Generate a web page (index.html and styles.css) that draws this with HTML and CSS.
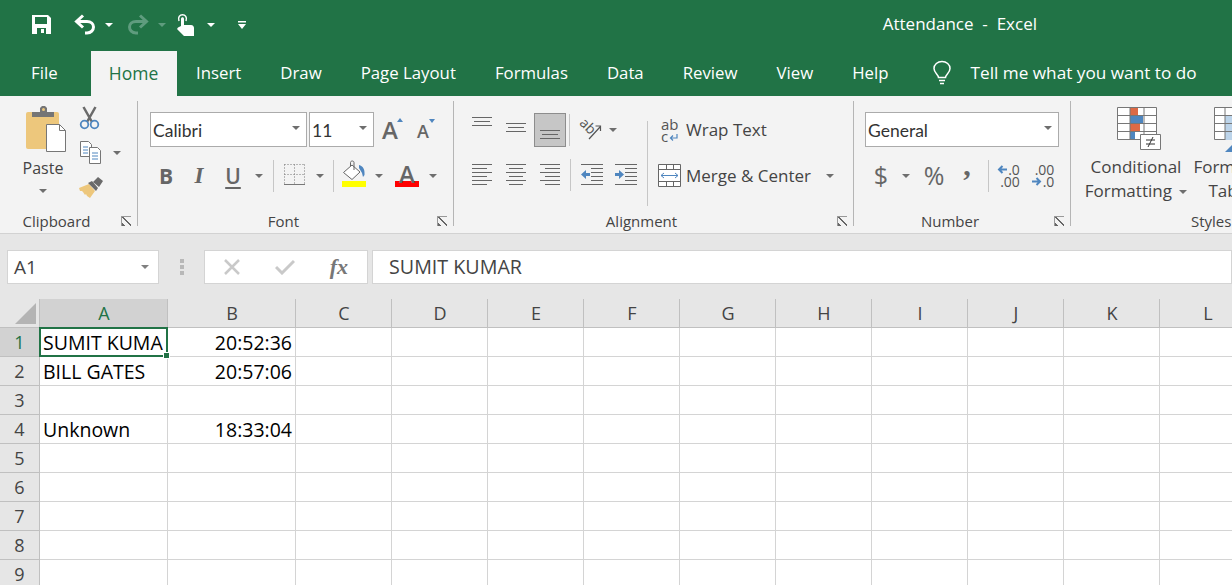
FILE: index.html
```html
<!DOCTYPE html>
<html>

<head>
    <title>Attendance - Excel</title>
    <link rel="stylesheet" href="styles.css">
</head>

<body>
    <header class="titlebar">
        <div class="qat">
            <svg class="save" width="19" height="19" viewBox="0 0 19 19"><path fill="#fff" d="M0 0h16l3 3v16H0z"/><path fill="#217346" d="M3 2h12v7H3zM5 13h9v6H5z"/><path fill="#fff" d="M9 14h3v4H9z"/></svg>
            <svg class="undo" width="22" height="21" viewBox="0 0 22 21"><path fill="none" stroke="#fff" stroke-width="3" d="M9 1.500 2.500 7.500 9 13.500M3 7.500h10c4 0 6.500 2.500 6.500 5.500s-2.500 6-6.500 6h-2"/></svg>
            <span class="caret white"></span>
            <svg class="redo" width="22" height="21" viewBox="0 0 22 21"><path fill="none" stroke="#5f9c7e" stroke-width="3" d="M13 1.500 19.500 7.500 13 13.500M19 7.500H9c-4 0-6.500 2.500-6.500 5.500s2.500 6 6.500 6h2"/></svg>
            <span class="caret dim"></span>
            <svg class="touch" width="17" height="22" viewBox="0 0 17 22"><path fill="#fff" d="M4 12V5c0-2.500 3-2.500 3 0v6h7c2 0 3 1.500 3 3v8H7L0 15l1-1.500z"/><path fill="none" stroke="#fff" stroke-width="1.500" d="M2 7C.500 3 3 .8 5.500.8S10.500 3 9 7"/></svg>
            <span class="caret white"></span>
            <svg class="customize" width="10" height="8" viewBox="0 0 10 8"><path fill="#fff" d="M1 0h8v1.500H1zM1 3h8L5 8z"/></svg>
        </div>
        <div class="doc-title">Attendance &nbsp;-&nbsp; Excel</div>
    </header>

    <nav class="tabs">
        <span class="tab tab-file">File</span>
        <span class="tab tab-active">Home</span>
        <span class="tab">Insert</span>
        <span class="tab">Draw</span>
        <span class="tab">Page Layout</span>
        <span class="tab">Formulas</span>
        <span class="tab">Data</span>
        <span class="tab">Review</span>
        <span class="tab">View</span>
        <span class="tab">Help</span>
        <span class="tell">
            <svg width="20" height="25" viewBox="0 0 20 25"><path fill="none" stroke="#fff" stroke-width="1.500" d="M6.500 17.500c0-3-4.500-4.500-4.500-9C2 4.500 5.500 1.500 10 1.500s8 3 8 7c0 4.500-4.500 6-4.500 9zM7 20.500h6M8 23.500h4"/></svg>
            Tell me what you want to do
        </span>
    </nav>

    <section class="ribbon">
        <div class="group group-clipboard">
            <div class="clip-body">
                <div class="paste">
                    <svg class="paste-icon" width="41" height="47" viewBox="0 0 41 47"><rect x="0" y="6" width="33" height="37" rx="2" fill="#edc77c"/><path fill="#757575" d="M6 11V6h8V2l2-2h3l2 2v4h7v5z"/><circle cx="17.500" cy="3.500" r="1.500" fill="#edc77c"/><path fill="#fff" stroke="#767676" d="M20.500 18.500h13l6 6v21h-19z"/><path fill="none" stroke="#767676" d="M33.500 18.500v6h6"/></svg>
                    <span class="paste-label">Paste</span>
                    <span class="caret"></span>
                </div>
                <div class="clip-tools">
                    <svg class="ic-cut" width="21" height="24" viewBox="0 0 21 24"><path fill="none" stroke="#6a6a6a" stroke-width="2.500" d="M4.500 1l8.500 15M16.500 1 8 16"/><circle cx="5.500" cy="18.500" r="3.800" fill="none" stroke="#4f86bf" stroke-width="1.800"/><circle cx="15.500" cy="18.500" r="3.800" fill="none" stroke="#4f86bf" stroke-width="1.800"/></svg>
                    <div class="copy-row">
                        <svg width="22" height="23" viewBox="0 0 22 23"><path fill="#fff" stroke="#767676" d="M.5.500h8l3 3v12H.500z"/><path fill="#fff" stroke="#767676" d="M9.500 6.500h8l3 3v13h-11z"/><path stroke="#4f86bf" d="M3 6h5M3 9h5M3 12h5M12 12h6M12 15h6M12 18h6"/></svg>
                        <span class="caret"></span>
                    </div>
                    <svg class="ic-brush" width="25" height="21" viewBox="0 0 25 21"><path fill="#edc77c" d="M0 11l10-4 6 7-5 7-3-2-1-2-1 1-2-3-1-1-2 0z"/><path fill="#6a6a6a" d="M9 6l4-2 6 7-2 3zM14 5l5-5 5 4-4 6z"/></svg>
                </div>
            </div>
            <div class="group-foot"><span class="group-label">Clipboard</span><span class="launcher"></span></div>
        </div>

        <div class="group group-font">
            <div class="font-top">
                <div class="select select-font"><span class="calibri">Calibri</span><span class="caret"></span></div>
                <div class="select select-size"><span class="calibri">11</span><span class="caret"></span></div>
                <span class="grow-a">A<i class="mini-up"></i></span>
                <span class="shrink-a">A<i class="mini-down"></i></span>
            </div>
            <div class="font-tools">
                <b class="glyph">B</b>
                <i class="glyph glyph-i">I</i>
                <span class="glyph glyph-u">U</span>
                <span class="caret"></span>
                <span class="divider"></span>
                <svg class="ic-border" width="21" height="21" viewBox="0 0 21 21"><path fill="none" stroke="#777" stroke-dasharray="1 2" d="M.5.500h20M.5 10.500h20M.5.500v20M10.500.500v20M20.500.500v20"/><path stroke="#777" d="M0 20.500h21"/></svg>
                <span class="caret"></span>
                <span class="divider"></span>
                <svg class="ic-fill" width="24" height="27" viewBox="0 0 24 27"><path fill="#fff" stroke="#666" d="M1.500 12.500 10 5l8 7-8 7.500z"/><path fill="none" stroke="#666" d="M8.500 6V2.500c0-2 3.500-2 3.500 0V10"/><path fill="#4f86bf" d="M17 5c4 1 6 4 5.500 10L21 17l-1-4-3-5z"/><path fill="#ff0" d="M0 21h24v6H0z"/></svg>
                <span class="caret"></span>
                <span class="color-a">A</span>
                <span class="caret"></span>
            </div>
            <div class="group-foot"><span class="group-label">Font</span><span class="launcher"></span></div>
        </div>

        <div class="group group-align">
            <div class="align-cols">
                <div class="align-left">
                    <div class="align-row">
                        <svg class="ic-top" width="20" height="9" viewBox="0 0 20 9"><path stroke="#666" d="M0 .5h20M2 4.500h16M0 8.500h20"/></svg>
                        <svg class="ic-mid" width="20" height="9" viewBox="0 0 20 9"><path stroke="#666" d="M0 .5h20M2 4.500h16M0 8.500h20"/></svg>
                        <span class="ic-bottom"><svg width="20" height="9" viewBox="0 0 20 9"><path stroke="#666" d="M0 .5h20M2 4.500h16M0 8.500h20"/></svg></span>
                        <span class="divider"></span>
                        <span class="ic-orient"><span class="orient-ab">ab</span><svg width="22" height="20" viewBox="0 0 22 20"><path fill="none" stroke="#555" stroke-width="1.200" d="M9 19 20 7M15.500 6H20.500V11"/></svg></span>
                        <span class="caret"></span>
                    </div>
                    <div class="align-row align-row-low">
                        <svg class="ic-par" width="20" height="21" viewBox="0 0 20 21"><path stroke="#666" d="M0 .5h20M0 4.500h15M0 8.500h20M0 12.500h15M0 16.500h20M0 20.500h15"/></svg>
                        <svg class="ic-par" width="20" height="21" viewBox="0 0 20 21"><path stroke="#666" d="M0 .5h20M3 4.500h14M0 8.500h20M3 12.500h14M0 16.500h20M3 20.500h14"/></svg>
                        <svg class="ic-par" width="20" height="21" viewBox="0 0 20 21"><path stroke="#666" d="M0 .5h20M5 4.500h15M0 8.500h20M5 12.500h15M0 16.500h20M5 20.500h15"/></svg>
                        <span class="divider"></span>
                        <svg class="ic-outdent" width="22" height="21" viewBox="0 0 22 21"><path stroke="#666" d="M0 .5h22M10 4.500h12M10 8.500h12M10 12.500h12M10 16.500h12M0 20.500h22"/><path fill="#4f86bf" d="M0 10.500 5 6v3h4v3H5v3z"/></svg>
                        <svg class="ic-indent" width="22" height="21" viewBox="0 0 22 21"><path stroke="#666" d="M0 .5h22M10 4.500h12M10 8.500h12M10 12.500h12M10 16.500h12M0 20.500h22"/><path fill="#4f86bf" d="M9 10.500 4 6v3H0v3h4v3z"/></svg>
                    </div>
                </div>
                <span class="divider divider-tall"></span>
                <div class="align-right">
                    <div class="wide-btn">
                        <span class="ic-wrap"><span>ab</span><span class="wrap-c">c<svg width="9" height="8" viewBox="0 0 9 8"><path fill="none" stroke="#4f86bf" stroke-width="1.200" d="M8 0v4H2M4 1.500 1.500 4 4 6.500"/></svg></span></span>
                        <span>Wrap Text</span>
                    </div>
                    <div class="wide-btn">
                        <svg class="ic-merge" width="23" height="23" viewBox="0 0 23 23"><path fill="#fff" stroke="#666" d="M.5.500h22v22H.500z"/><path stroke="#666" d="M0 5.500h23M0 17.500h23M8.500 0v5M15.500 0v5M8.500 18v5M15.500 18v5"/><path fill="none" stroke="#4f86bf" d="M3 11.500h17M6 9l-3 2.500L6 14M17 9l3 2.500-3 2.500"/></svg>
                        <span>Merge &amp; Center</span>
                        <span class="caret caret-merge"></span>
                    </div>
                </div>
            </div>
            <div class="group-foot"><span class="group-label">Alignment</span><span class="launcher"></span></div>
        </div>

        <div class="group group-number">
            <div class="select select-number"><span class="calibri">General</span><span class="caret"></span></div>
            <div class="number-tools">
                <span class="num-glyph">$</span>
                <span class="caret"></span>
                <span class="num-glyph">%</span>
                <span class="num-comma">,</span>
                <span class="divider"></span>
                <span class="decimals">
                    <span class="dec-line"><svg width="10" height="9" viewBox="0 0 10 9"><path fill="none" stroke="#4f86bf" stroke-width="2" d="M10 4.500H2M5.500 1 2 4.500 5.500 8"/></svg>.0</span>
                    <span class="dec-line">.00</span>
                </span>
                <span class="decimals">
                    <span class="dec-line">.00</span>
                    <span class="dec-line"><svg width="10" height="9" viewBox="0 0 10 9"><path fill="none" stroke="#4f86bf" stroke-width="2" d="M0 4.500h8M4.500 1 8 4.500 4.500 8"/></svg>.0</span>
                </span>
            </div>
            <div class="group-foot"><span class="group-label">Number</span><span class="launcher"></span></div>
        </div>

        <div class="group group-styles">
            <div class="style-cols">
                <div class="style-btn style-cond">
                    <svg width="44" height="44" viewBox="0 0 44 44"><path fill="#fff" stroke="#777" d="M.5.500h39v32H.500z"/><path fill="#dd6a46" d="M13 1h8v7h-8zM13 17h10v7H13z"/><path fill="#4f86bf" d="M13 9h13v7H13zM13 25h5v7h-5z"/><path stroke="#777" d="M0 8.500h40M0 16.500h40M0 24.500h40M13 0v33M27 0v33"/><path fill="#fff" stroke="#777" d="M23.500 27.500h20v15h-20z"/><path stroke="#333" d="M29 33h9M29 37h9M36 30l-5 10"/></svg>
                    <span>Conditional</span>
                    <span>Formatting <i class="caret caret-inline"></i></span>
                </div>
                <div class="style-btn style-table">
                    <svg width="44" height="46" viewBox="0 0 44 46"><path fill="#fff" stroke="#777" d="M.5.500h39v32H.500z"/><path fill="#bcd4ea" d="M11 9h29v24H11z"/><path stroke="#777" d="M0 8.500h40M0 16.500h40M0 24.500h40M11 0v33"/><path fill="#4f86bf" d="M11 45l12-12v12z"/></svg>
                    <span class="format-as">Format as</span>
                    <span>Table</span>
                </div>
            </div>
            <div class="group-foot"><span class="group-label">Styles</span></div>
        </div>
    </section>

    <section class="formula-bar">
        <div class="name-box"><span>A1</span><span class="caret"></span></div>
        <div class="grip"><i></i><i></i><i></i></div>
        <div class="fx-buttons">
            <svg width="18" height="16" viewBox="0 0 18 16"><path fill="none" stroke="#c9c9c9" stroke-width="2.500" d="M2 1l14 14M16 1 2 15"/></svg>
            <svg width="20" height="16" viewBox="0 0 20 16"><path fill="none" stroke="#c9c9c9" stroke-width="3" d="M1 8l6 6L19 2"/></svg>
            <span class="fx">fx</span>
        </div>
        <div class="formula-input">SUMIT KUMAR</div>
    </section>

    <table class="sheet">
        <thead>
            <tr>
                <th class="corner"><span class="corner-mark"></span></th>
                <th class="col-a picked">A</th>
                <th class="col-b">B</th>
                <th>C</th><th>D</th><th>E</th><th>F</th><th>G</th><th>H</th><th>I</th><th>J</th><th>K</th><th>L</th>
            </tr>
        </thead>
        <tbody>
            <tr><th class="picked">1</th><td class="active"><div class="clip">SUMIT KUMA</div><span class="handle"></span></td><td class="num">20:52:36</td><td></td><td></td><td></td><td></td><td></td><td></td><td></td><td></td><td></td><td></td></tr>
            <tr><th>2</th><td>BILL GATES</td><td class="num">20:57:06</td><td></td><td></td><td></td><td></td><td></td><td></td><td></td><td></td><td></td><td></td></tr>
            <tr><th>3</th><td></td><td></td><td></td><td></td><td></td><td></td><td></td><td></td><td></td><td></td><td></td><td></td></tr>
            <tr><th>4</th><td>Unknown</td><td class="num">18:33:04</td><td></td><td></td><td></td><td></td><td></td><td></td><td></td><td></td><td></td><td></td></tr>
            <tr><th>5</th><td></td><td></td><td></td><td></td><td></td><td></td><td></td><td></td><td></td><td></td><td></td><td></td></tr>
            <tr><th>6</th><td></td><td></td><td></td><td></td><td></td><td></td><td></td><td></td><td></td><td></td><td></td><td></td></tr>
            <tr><th>7</th><td></td><td></td><td></td><td></td><td></td><td></td><td></td><td></td><td></td><td></td><td></td><td></td></tr>
            <tr><th>8</th><td></td><td></td><td></td><td></td><td></td><td></td><td></td><td></td><td></td><td></td><td></td><td></td></tr>
            <tr><th>9</th><td></td><td></td><td></td><td></td><td></td><td></td><td></td><td></td><td></td><td></td><td></td><td></td></tr>
        </tbody>
    </table>
</body>

</html>
```

FILE: styles.css
```css
html,
body {
    margin: 0;
    padding: 0;
    width: 1232px;
    height: 585px;
    overflow: hidden;
    background: #fff;
    font-family: "Open Sans", "Noto Sans", sans-serif;
    font-size: 17px;
    color: #444;
}

svg {
    display: block;
    flex: none;
}

/* title bar */
.titlebar {
    height: 51px;
    background: #217346;
    color: #fff;
    display: flex;
    justify-content: space-between;
    align-items: center;
    padding: 0 195px 2px 32px;
    box-sizing: border-box;
}

.qat {
    display: flex;
    align-items: center;
}

.undo { margin-left: 23px; }
.qat .undo + .caret { margin-left: 9px; }
.redo { margin-left: 14px; }
.redo + .caret { margin-left: 9px; }
.touch { margin-left: 11px; }
.touch + .caret { margin-left: 13px; }
.customize { margin-left: 22px; }

.doc-title {
    font-size: 17px;
    margin-bottom: 2px;
}

.caret {
    display: block;
    flex: none;
    width: 0;
    height: 0;
    border-left: 4px solid transparent;
    border-right: 4px solid transparent;
    border-top: 4px solid #6e6e6e;
}

.caret.white { border-top-color: #fff; }
.caret.dim { border-top-color: #5f9c7e; }

/* tabs */
.tabs {
    height: 45px;
    background: #217346;
    color: #fff;
    display: flex;
    padding-left: 11.5px;
    font-size: 16.8px;
    line-height: 44px;
}

.tab {
    padding: 0 19.5px;
    white-space: nowrap;
}

.tab-file { margin-right: 13.5px; }

.tab-active {
    background: #f3f3f3;
    color: #217346;
    padding: 0;
    width: 86px;
    text-align: center;
    font-size: 17.5px;
}

.tell {
    display: flex;
    align-items: center;
    gap: 18.5px;
    margin-left: 24px;
    padding-bottom: 2px;
    font-size: 17.2px;
    white-space: nowrap;
}

/* ribbon */
.ribbon {
    height: 138px;
    background: #f3f3f3;
    border-bottom: 1px solid #d2d2d2;
    box-sizing: border-box;
    display: flex;
    overflow: hidden;
    padding-top: 5px;
}

.group {
    height: 125px;
    box-sizing: border-box;
    border-right: 1px solid #b5b5b5;
    flex: none;
    display: flex;
    flex-direction: column;
    padding-top: 11px;
}

.group-clipboard { width: 138px; padding-top: 0; }
.group-font { width: 316px; padding-left: 12px; }
.group-align { width: 400px; }
.group-number { width: 217px; padding-left: 11px; }
.group-styles { flex: 1; border-right: none; padding-top: 0; }

.group-foot {
    margin-top: auto;
    height: 10px;
    display: flex;
    align-items: center;
    font-size: 15px;
    line-height: 10px;
}

.group-font .group-foot { margin-left: -12px; }
.group-number .group-foot { margin-left: -11px; }

.group-label {
    flex: 1;
    text-align: center;
}

.group-styles .group-label {
    flex: none;
    margin-left: 120px;
}

.launcher {
    width: 10px;
    height: 10px;
    margin: 0 6px 0 8px;
    box-sizing: border-box;
    border-left: 1px solid #999;
    border-top: 1px solid #999;
    background: linear-gradient(45deg, #666 0 20%, transparent 20%),
        linear-gradient(45deg, transparent 46%, #666 46% 56%, transparent 56%);
}

.divider {
    display: block;
    width: 1px;
    height: 32px;
    background: #c6c6c6;
    flex: none;
}

.divider-tall {
    height: 85px;
    margin: 9px 0 0;
}

/* clipboard */
.clip-body {
    display: flex;
    padding-top: 5px;
}

.paste {
    width: 74px;
    margin: 0 -1px 0 6px;
    display: flex;
    flex-direction: column;
    align-items: center;
}

.paste-icon { margin-left: 7px; }
.paste-label { margin-top: 4px; line-height: 22px; font-size: 16px; }
.paste .caret { margin-top: 10px; }

.clip-tools {
    display: flex;
    flex-direction: column;
}

.copy-row {
    display: flex;
    align-items: center;
    gap: 11px;
    margin: 11px 0 13px 1px;
}

/* font */
.font-top {
    display: flex;
    height: 35px;
    align-items: center;
}

.select {
    height: 35px;
    box-sizing: border-box;
    background: #fff;
    border: 1px solid #ababab;
    display: flex;
    align-items: center;
    justify-content: space-between;
    padding: 0 6px 0 2px;
    flex: none;
}

.select .caret { margin-top: -4px; }
.select-font { width: 157px; }
.select-size { width: 65px; margin-left: 2px; }
.select-number { width: 194px; }

.calibri {
    font-family: Lato, "Open Sans", sans-serif;
    font-size: 17.5px;
    padding-top: 1px;
    color: #333;
}

.grow-a,
.shrink-a {
    font-weight: 600;
    color: #666;
    line-height: 1;
    display: flex;
    align-items: flex-start;
}

.grow-a { font-size: 24px; margin-left: 8px; }
.shrink-a { font-size: 18px; margin-left: 14px; padding-top: 3px; }
.grow-a .mini-up { margin: 0 0 0 -1px; }
.shrink-a .mini-down { margin: -3px 0 0 0; }

.mini-up,
.mini-down {
    display: block;
    width: 0;
    height: 0;
    border-left: 3.500px solid transparent;
    border-right: 3.500px solid transparent;
}

.mini-up { border-bottom: 4px solid #4f86bf; }
.mini-down { border-top: 4px solid #4f86bf; }

.font-tools {
    margin-top: 11px;
    height: 35px;
    display: grid;
    grid-template-columns: 32px 34px 34px 18px 10px 32px 20px 6px 36px 14px 42px 10px;
    align-items: center;
    justify-items: center;
}

.glyph {
    font-size: 21px;
    color: #666;
}

.glyph-i { font-family: "Liberation Serif", serif; font-weight: 700; font-size: 23px; }
.glyph-u { font-weight: 600; text-decoration: underline; text-underline-offset: 3px; }
.ic-border { margin-bottom: 2px; }
.ic-fill { margin-bottom: 4px; }

.color-a {
    width: 24px;
    height: 23px;
    box-sizing: border-box;
    border-bottom: 6px solid #f00;
    text-align: center;
    font-size: 24px;
    font-weight: 600;
    line-height: 19px;
    color: #666;
}

/* alignment */
.align-cols {
    display: flex;
    padding-left: 18px;
}

.align-left {
    width: 175px;
}

.align-row {
    display: flex;
    align-items: center;
    height: 35px;
}

.align-row-low { margin-top: 8px; }
.align-row-low svg { margin-top: 4px; }
.align-row-low .divider { margin-top: 4px; }
.ic-top { margin-bottom: 17px; }
.ic-mid { margin: 0 0 5px 14px; }

.ic-bottom {
    width: 32px;
    height: 34px;
    box-sizing: border-box;
    margin: 1px 3px 0 8px;
    background: #c6c6c6;
    border: 1px solid #8d8d8d;
    display: flex;
    justify-content: center;
    align-items: flex-end;
    padding-bottom: 7px;
}

.ic-orient {
    margin-left: 10px;
    width: 22px;
    height: 20px;
    display: block;
    position: relative;
}

.orient-ab {
    position: absolute;
    left: 0;
    top: -3px;
    font-size: 14px;
    line-height: 18px;
    color: #555;
    transform: rotate(45deg);
}

.ic-orient + .caret { margin-left: 7px; }
.ic-par { margin-right: 14px; }
.ic-par + .divider { margin-left: -4px; }
.ic-outdent { margin-left: 10px; }
.ic-indent { margin-left: 12px; }

.align-right {
    margin-left: 10px;
    display: flex;
    flex-direction: column;
    gap: 11px;
}

.wide-btn {
    height: 35px;
    display: flex;
    align-items: center;
    gap: 5px;
    white-space: nowrap;
}

.ic-wrap {
    width: 20px;
    margin: 0 0 0 3px;
    display: flex;
    flex-direction: column;
    font-size: 15px;
    line-height: 12px;
    color: #555;
}

.wrap-c {
    display: flex;
    align-items: flex-end;
    gap: 1px;
}

.caret-merge { margin-left: 10px; }

/* number */
.number-tools {
    margin-top: 11px;
    height: 35px;
    display: grid;
    grid-template-columns: 32px 18px 38px 28px 14px 27px 42px;
    align-items: center;
    justify-items: center;
}

.num-glyph { font-size: 25px; color: #666; margin-top: -2px; }

.num-comma {
    font-family: "Liberation Serif", serif;
    font-weight: 700;
    font-size: 30px;
    line-height: 20px;
    margin-top: -21px;
    color: #666;
}

.decimals {
    display: flex;
    flex-direction: column;
    align-items: flex-end;
    font-size: 14px;
    line-height: 12px;
    color: #555;
}

.dec-line {
    display: flex;
    align-items: center;
    gap: 1px;
}

/* styles */
.style-cols {
    display: flex;
    padding-top: 6px;
}

.style-btn {
    display: flex;
    flex-direction: column;
    align-items: center;
    white-space: nowrap;
    line-height: 24px;
    flex: none;
    height: 96px;
}

.style-btn svg { margin-bottom: 4px; }
.style-cond { width: 108px; margin-left: 11px; }
.style-cond svg { margin-left: 6px; }
.style-table { width: 80px; }
.style-table svg { margin: 0 0 2px 12px; }
.format-as { margin-left: 6px; }
.caret-inline { display: inline-block; vertical-align: middle; margin-left: 3px; }

/* formula bar */
.formula-bar {
    height: 65px;
    background: #e6e6e6;
    box-sizing: border-box;
    padding: 16px 0 15px 7px;
    display: flex;
    font-size: 19px;
}

.name-box,
.fx-buttons,
.formula-input {
    background: #fff;
    border: 1px solid #d4d4d4;
    box-sizing: border-box;
    display: flex;
    align-items: center;
}

.name-box {
    width: 152px;
    justify-content: space-between;
    padding: 0 9px 0 6px;
}

.name-box .caret { border-top-color: #808080; }

.grip {
    width: 45px;
    display: flex;
    flex-direction: column;
    align-items: center;
    justify-content: center;
    gap: 2px;
}

.grip i {
    display: block;
    width: 4px;
    height: 4px;
    background: #b8b8b8;
}

.fx-buttons {
    width: 164px;
    justify-content: space-between;
    padding: 0 19px 0 18px;
}

.fx {
    font-family: "Liberation Serif", serif;
    font-style: italic;
    font-weight: 700;
    font-size: 22px;
    color: #777;
}

.formula-input {
    flex: 1;
    margin-left: 4px;
    padding: 0 0 2px 16px;
    font-size: 19.7px;
}

/* grid */
.sheet {
    border-collapse: separate;
    border-spacing: 0;
    table-layout: fixed;
    width: 1256px;
    margin-top: 0;
    color: #000;
    font-size: 19.5px;
}

.sheet th,
.sheet td {
    box-sizing: border-box;
    height: 29px;
    width: 96px;
    padding: 0;
    font-weight: normal;
    border-right: 1px solid #d4d4d4;
    border-bottom: 1px solid #d4d4d4;
    overflow: hidden;
    white-space: nowrap;
}

.sheet th {
    background: #e6e6e6;
    color: #444;
    border-color: #c0c0c0;
    text-align: center;
    font-size: 18px;
}

.sheet thead th { padding-left: 1px; }

.sheet .corner {
    width: 40px;
}

.sheet thead .corner { padding-left: 0; }

.corner-mark {
    display: block;
    width: 0;
    height: 0;
    margin-left: 15px;
    border-left: 21px solid transparent;
    border-bottom: 21px solid #b4b4b4;
}

.sheet .col-a,
.sheet .col-b { width: 128px; }

.sheet th.picked {
    background: #d2d2d2;
    color: #217346;
}

.sheet td {
    padding: 1px 3px 0;
}

.sheet .num { text-align: right; }

.sheet td.active {
    position: relative;
    overflow: visible;
}

.clip {
    overflow: hidden;
}

.active::after {
    content: "";
    position: absolute;
    left: -1px;
    top: -1px;
    right: -1px;
    bottom: -1px;
    border: 2px solid #217346;
}

.handle {
    position: absolute;
    right: -3px;
    bottom: -3px;
    width: 5px;
    height: 5px;
    background: #217346;
    border: 1px solid #fff;
    z-index: 1;
}
```
